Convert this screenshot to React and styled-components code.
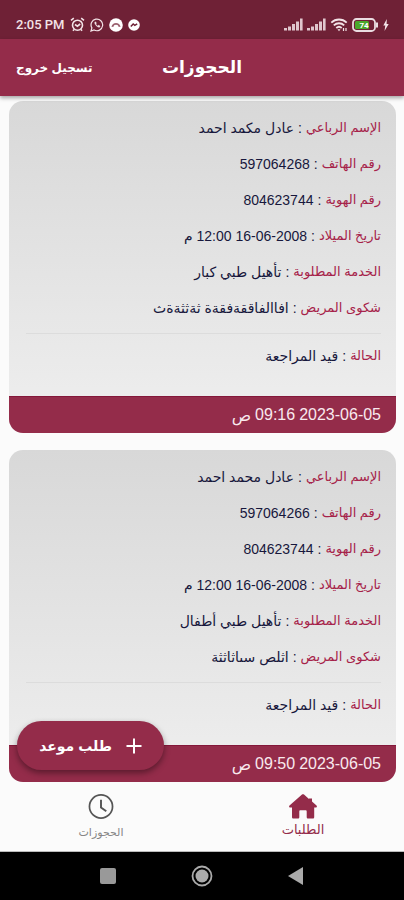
import React from "react";
import styled, { createGlobalStyle } from "styled-components";

const WINE = "#942c4a";

const GlobalStyle = createGlobalStyle`
  *, *::before, *::after { box-sizing: border-box; }
  body {
    margin: 0;
    background: #fbfbfb;
    font-family: "Liberation Sans", "DejaVu Sans", sans-serif;
  }
  button { font-family: inherit; border: 0; background: none; padding: 0; cursor: pointer; }
`;

const Screen = styled.div`
  position: relative;
  display: flex;
  flex-direction: column;
  min-height: 100vh;
`;

const StatusBar = styled.div`
  display: flex;
  align-items: center;
  justify-content: space-between;
  height: 39px;
  padding: 10px 15px 0 16px;
  background: #6f2136;
  color: #f3e3e7;
`;

const StatusGroup = styled.div`
  display: flex;
  align-items: center;
  gap: ${(p) => p.$gap}px;
`;

const Clock = styled.time`
  font: 500 13px/18px Roboto, sans-serif;
`;

const AppBar = styled.header`
  position: relative;
  display: grid;
  grid-template-columns: 1fr auto 1fr;
  align-items: center;
  height: 57px;
  padding: 0 16px;
  background: ${WINE};
  color: #fff;
  box-shadow: 0 2px 4px rgba(0, 0, 0, 0.35);
`;

const LogoutButton = styled.button`
  justify-self: start;
  color: #fff;
  font-size: 12px;
  font-weight: 700;
  line-height: 20px;
  white-space: nowrap;
`;

const Title = styled.h1`
  margin: 0;
  font-size: 17px;
  font-weight: 700;
  line-height: 28px;
`;

const List = styled.main`
  flex: 1;
  display: flex;
  flex-direction: column;
  gap: 17px;
  padding: 5px 8px 0 9px;
`;

const Card = styled.article`
  border-radius: 14px;
  overflow: hidden;
  background: linear-gradient(#d8d8d8, #efefef);
`;

const Details = styled.dl`
  display: flex;
  flex-direction: column;
  gap: 12px;
  margin: 0;
  padding: 15px 15px 13px;
`;

const Field = styled.div`
  display: flex;
  align-items: center;
  gap: 4px;
  height: 24px;
  line-height: 24px;
  font-size: 14px;
  white-space: nowrap;
  color: #17173c;
`;

const Label = styled.dt`
  font-size: 13px;
  color: #a62249;
`;

const Value = styled.dd`
  margin: 0;
`;

const Status = styled.dl`
  margin: 0 15px 0 17px;
  padding: 10px 0 28px;
  border-top: 1px solid #dcdcdc;
`;

const StatusField = styled(Field)`
  margin-inline-start: 0;
`;

const CardFooter = styled.footer`
  display: flex;
  align-items: center;
  gap: 4px;
  height: 37px;
  padding: 0 15px;
  background: ${WINE};
  border-top: 1px solid #84183a;
  color: #f9e9ee;
  font-size: 16px;
`;

const Fab = styled.button`
  position: absolute;
  left: 17px;
  bottom: 130px;
  display: flex;
  align-items: center;
  justify-content: center;
  gap: 14px;
  width: 147px;
  height: 49px;
  border-radius: 25px;
  background: ${WINE};
  color: #fff;
  font-size: 14px;
  font-weight: 700;
  box-shadow: 0 3px 6px rgba(0, 0, 0, 0.4);
`;

const Tabs = styled.nav`
  display: grid;
  grid-template-columns: 1fr 1fr;
  height: 69px;
  border-bottom: 1px solid #bbb;
`;

const Tab = styled.button`
  display: flex;
  flex-direction: column;
  align-items: center;
  gap: ${(p) => (p.$active ? 1 : 3)}px;
  padding-top: 11px;
  color: ${(p) => (p.$active ? WINE : "#858585")};
  font-size: ${(p) => (p.$active ? 13 : 11)}px;
  line-height: 20px;
`;

const SystemBar = styled.div`
  display: flex;
  align-items: center;
  justify-content: space-between;
  height: 48px;
  padding: 0 97px;
  background: #000;
`;

const SystemButton = styled.button`
  display: flex;
`;

const AlarmIcon = () => (
  <svg width="15" height="15" viewBox="0 0 15 15" fill="none" stroke="currentColor" strokeWidth="1.6">
    <circle cx="7.5" cy="8.2" r="5" />
    <path d="M1 3.4 3.8 1.2M14 3.4 11.2 1.2M5 7.5l2.4 1.7L10.2 7" />
    <path d="M4 12.4l-1 1.3M11 12.4l1 1.3" />
  </svg>
);

const WhatsAppIcon = () => (
  <svg width="14" height="14" viewBox="0 0 14 14" fill="none" stroke="currentColor" strokeWidth="1.2">
    <path d="M1 13l.9-3.1A5.8 5.8 0 1 1 4.1 12z" />
    <path d="M4.7 4.2c-.6 1.9 2.9 5.6 5 5l.4-1.3-1.6-.8-.7.8C6.7 7.4 6.2 6.8 5.9 6l.6-.7-.7-1.5z" fill="currentColor" strokeWidth=".3" />
  </svg>
);

const CallIcon = () => (
  <svg width="14" height="14" viewBox="0 0 14 14">
    <circle cx="7" cy="7" r="6.8" fill="#fff" />
    <path d="M2.5 9c.5-5.5 8.5-5.5 9 0l-2-.3-.6-1.5c-1-.7-2.8-.7-3.8 0l-.6 1.500z" fill="#9b6270" />
  </svg>
);

const MessengerIcon = () => (
  <svg width="12" height="12" viewBox="0 0 12 12">
    <circle cx="6" cy="6" r="5.8" fill="#fff" />
    <path d="M2.8 7.5 5.2 5l1.6 1.3L9.2 4.8" fill="none" stroke="#6f2136" strokeWidth="1.5" />
  </svg>
);

const SignalIcon = () => (
  <svg width="19" height="13" viewBox="0 0 19 13" fill="currentColor">
    <path d="M0 10h3v2.5H0zM4 8.5h3v4H4zM8 6h3v6.5H8zM12 3.5h3v9h-3zM16 .5h2.6v12H16z" opacity=".85" />
  </svg>
);

const WifiIcon = () => (
  <svg width="18" height="14" viewBox="0 0 17 14" fill="none" stroke="currentColor" strokeWidth="1.8">
    <path d="M.8 4.7c4.4-4.3 11-4.3 15.4 0M3.3 7.4c3-2.9 7.4-2.9 10.4 0M5.8 10c1.6-1.5 3.8-1.5 5.4 0" />
    <path d="M7 11.3h3l-1.5 1.9z" fill="currentColor" stroke="none" />
    <path d="M13 10v3M15.5 10v3" strokeWidth="1.2" />
  </svg>
);

const BatteryIcon = () => (
  <svg width="27" height="14" viewBox="0 0 27 14">
    <rect x="1" y="1" width="22" height="12" rx="3.5" fill="#6f2136" stroke="#eadde1" strokeWidth="1.8" />
    <path d="M24 4.5h2v5h-2z" fill="#eadde1" />
    <rect x="3" y="3" width="14" height="8" rx="1.5" fill="#4aa82b" />
    <text x="12" y="10" textAnchor="middle" fill="#fff" fontSize="8" fontWeight="700" fontFamily="Roboto, sans-serif">74</text>
  </svg>
);

const BoltIcon = () => (
  <svg width="6" height="12" viewBox="0 0 6 12" fill="currentColor">
    <path d="M3.8 0 .3 6.5h2L1.5 12 5.7 5H3.6z" />
  </svg>
);

const PlusIcon = () => (
  <svg width="16" height="16" viewBox="0 0 16 16" stroke="currentColor" strokeWidth="2">
    <path d="M8 .5v15M.5 8h15" />
  </svg>
);

const HomeIcon = () => (
  <svg width="28" height="25" viewBox="0 0 28 25" fill="currentColor">
    <path d="M13 .6c.6-.5 1.400-.5 2 0L20 4.900V4.500h3v3L27.500 11.600c.8.8.3 1.900-.7 1.900h-1.600v9.500c0 1-.5 1.500-1.500 1.500h-4.500c-1 0-1.500-.5-1.500-1.500v-5.500c0-.8-.4-1.200-1.200-1.200h-5c-.8 0-1.200.4-1.200 1.200V23c0 1-.5 1.500-1.500 1.500H4.500C3.500 24.500 3 24 3 23v-9.500H1.200c-1 0-1.500-1.100-.7-1.900z" />
  </svg>
);

const HistoryIcon = () => (
  <svg width="26" height="25" viewBox="0 0 26 26" fill="none" stroke="#555" strokeWidth="1.8">
    <circle cx="13" cy="13" r="12" />
    <path d="M13 6v8l5.5 4" strokeWidth="2" />
  </svg>
);

const requests = [
  { name: "عادل مكمد احمد", phone: "597064268", service: "تأهيل طبي كبار", complaint: "افاالفاققةفقةة ثةثثةةث", time: "09:16" },
  { name: "عادل محمد احمد", phone: "597064266", service: "تأهيل طبي أطفال", complaint: "اثلص سىاثاثثة", time: "09:50" },
];

const Row = ({ as: Wrapper = Field, label, children }) => (
  <Wrapper>
    <Label>{label}</Label>
    <span>:</span>
    <Value>{children}</Value>
  </Wrapper>
);

const RequestCard = ({ item }) => (
  <Card>
    <Details>
      <Row label="الإسم الرباعي">{item.name}</Row>
      <Row label="رقم الهاتف">{item.phone}</Row>
      <Row label="رقم الهوية">804623744</Row>
      <Row label="تاريخ الميلاد">
        <bdi dir="ltr">16-06-2008</bdi> <bdi dir="ltr">12:00</bdi> م
      </Row>
      <Row label="الخدمة المطلوبة">{item.service}</Row>
      <Row label="شكوى المريض">{item.complaint}</Row>
    </Details>
    <Status>
      <Row as={StatusField} label="الحالة">قيد المراجعة</Row>
    </Status>
    <CardFooter>
      <bdi dir="ltr">2023-06-05</bdi>
      <bdi dir="ltr">{item.time}</bdi>
      <span>ص</span>
    </CardFooter>
  </Card>
);

export default function App() {
  return (
    <Screen dir="rtl" lang="ar">
      <GlobalStyle />
      <StatusBar dir="ltr">
        <StatusGroup $gap={5}>
          <Clock>2:05 PM</Clock>
          <AlarmIcon />
          <WhatsAppIcon />
          <CallIcon />
          <MessengerIcon />
        </StatusGroup>
        <StatusGroup $gap={4}>
          <SignalIcon />
          <SignalIcon />
          <WifiIcon />
          <BatteryIcon />
          <BoltIcon />
        </StatusGroup>
      </StatusBar>
      <AppBar dir="ltr">
        <LogoutButton type="button">تسجيل خروج</LogoutButton>
        <Title>الحجوزات</Title>
      </AppBar>
      <List>
        {requests.map((item) => (
          <RequestCard key={item.phone} item={item} />
        ))}
      </List>
      <Tabs>
        <Tab type="button" $active aria-current="page"><HomeIcon />الطلبات</Tab>
        <Tab type="button"><HistoryIcon />الحجوزات</Tab>
      </Tabs>
      <SystemBar dir="ltr">
        <SystemButton type="button" aria-label="Recent apps">
          <svg width="22" height="22" viewBox="0 0 22 22"><rect x="3" y="3" width="16" height="16" rx="2" fill="#999" /></svg>
        </SystemButton>
        <SystemButton type="button" aria-label="Home">
          <svg width="22" height="22" viewBox="0 0 22 22"><circle cx="11" cy="11" r="9.5" fill="none" stroke="#aaa" strokeWidth="1.8" /><circle cx="11" cy="11" r="6.5" fill="#aaa" /></svg>
        </SystemButton>
        <SystemButton type="button" aria-label="Back">
          <svg width="22" height="22" viewBox="0 0 22 22"><path d="M3 11 18 2v18z" fill="#aaa" /></svg>
        </SystemButton>
      </SystemBar>
      <Fab type="button"><PlusIcon />طلب موعد</Fab>
    </Screen>
  );
}
